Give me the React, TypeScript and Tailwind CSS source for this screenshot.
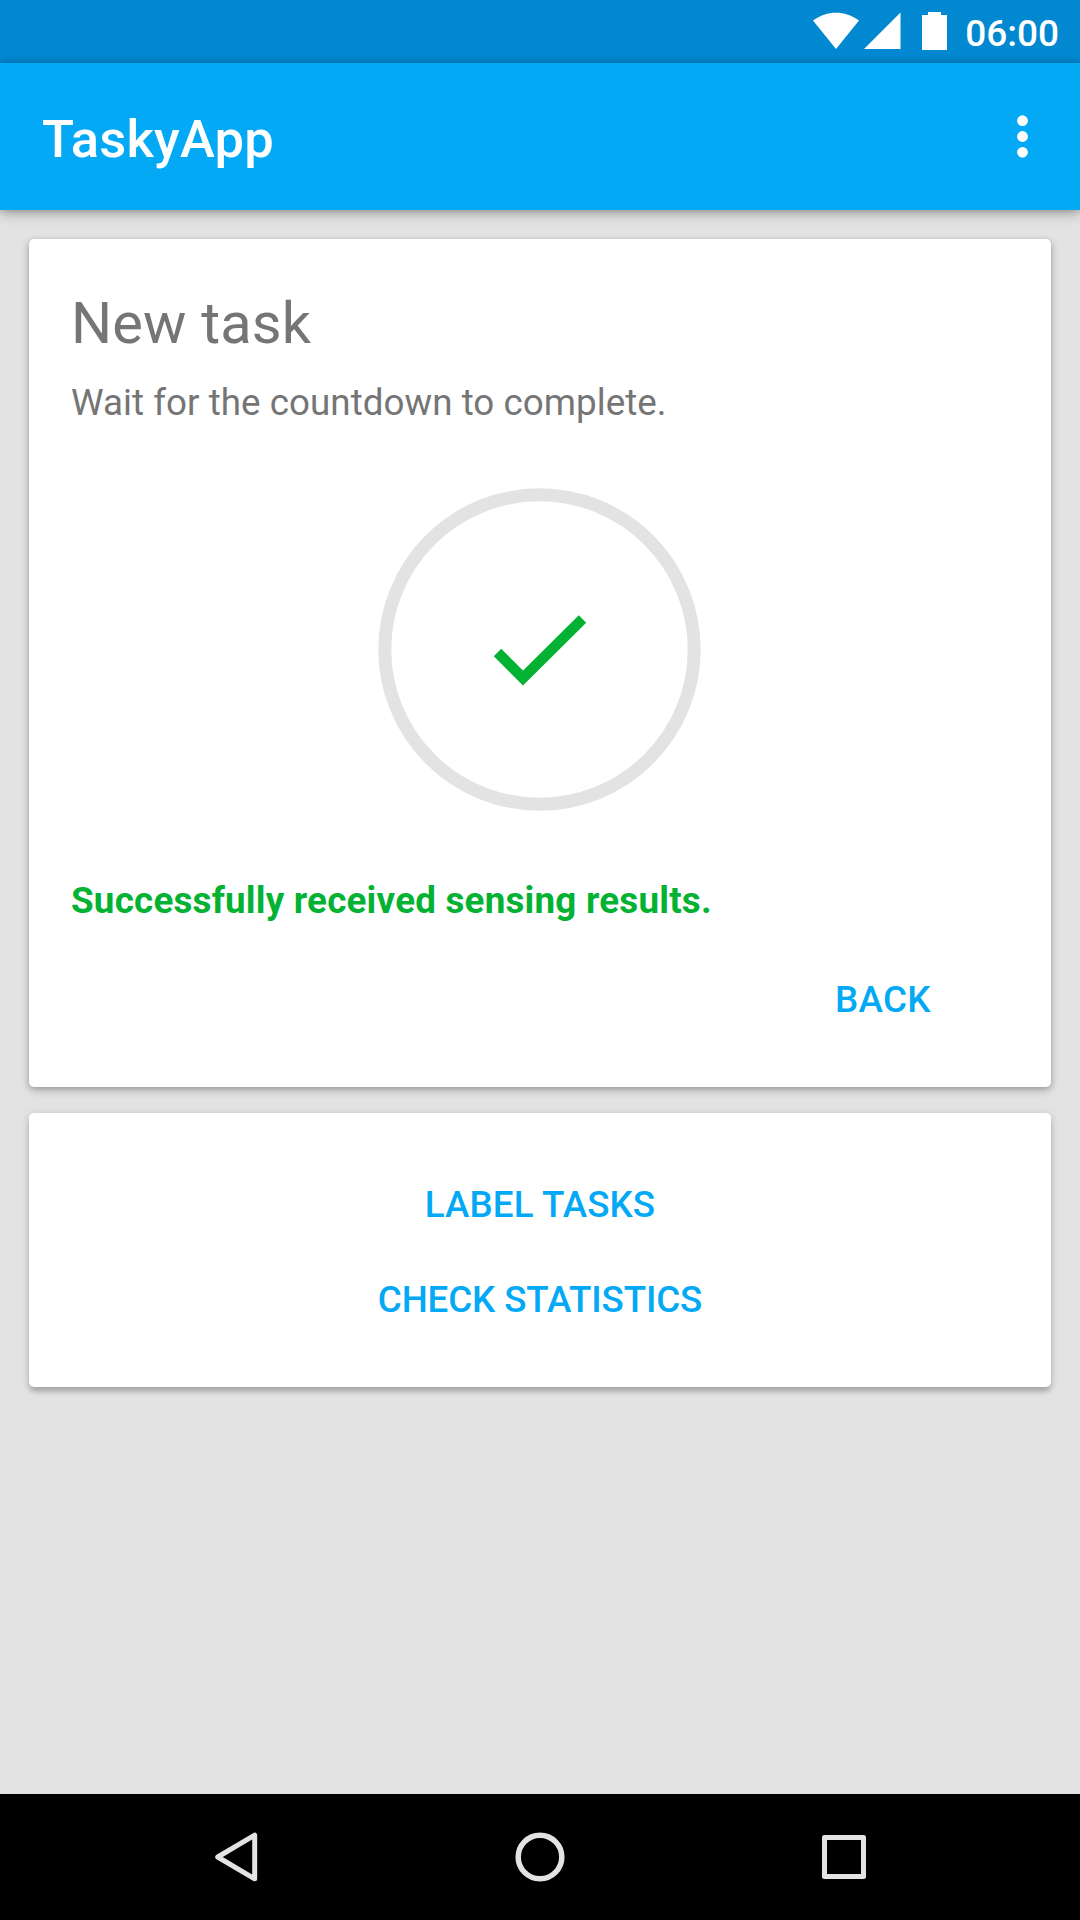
import React from "react";

const cardShadow =
  "shadow-[0_3px_8px_0_rgba(0,0,0,0.28),0_1px_4px_0_rgba(0,0,0,0.1)]";
const raisedCardShadow =
  "shadow-[0_6px_5px_-1px_rgba(0,0,0,0.16),0_2px_8px_0_rgba(0,0,0,0.18)]";

function StatusBar() {
  return (
    <div className="flex h-[63px] shrink-0 justify-end bg-[#0288d1] pr-[21px] text-white">
      <svg className="mr-[18px] h-[63px] w-[134px]" viewBox="0 0 134 63" fill="currentColor">
        <path d="M0 20.5C14 10 32 10 46 20.5L23 49Z" />
        <path d="M51 49L87.5 12.5V49Z" />
        <path d="M109 15h6v-3h13v3h6v35h-25Z" />
      </svg>
      <span className="mt-[12px] text-[37px] leading-[43px] font-medium">06:00</span>
    </div>
  );
}

function AppBar() {
  return (
    <header className="relative flex h-[147px] shrink-0 items-center justify-between bg-[#03a9f4] pl-[42px] text-white shadow-[0_4px_12px_0_rgba(0,0,0,0.26),0_0_7px_0_rgba(0,0,0,0.2)]">
      <h1 className="mt-[4px] text-[52.5px] leading-[62px] font-medium tracking-[0.2px]">TaskyApp</h1>
      <button className="h-[147px] w-[74px]" aria-label="More options">
        <svg className="block h-[147px] w-[74px]" viewBox="0 0 74 147" fill="currentColor">
          <circle cx="16.5" cy="57.7" r="5.4" />
          <circle cx="16.5" cy="73.5" r="5.4" />
          <circle cx="16.5" cy="89.3" r="5.4" />
        </svg>
      </button>
    </header>
  );
}

function NavBar() {
  return (
    <nav className="flex h-[126px] shrink-0 items-center justify-between bg-black px-[211px] text-[#e3e3e3]">
      <svg className="h-[50px] w-[50px]" viewBox="0 0 50 50" fill="none" stroke="currentColor" strokeWidth="5" strokeLinejoin="round">
        <path d="M6.700 25L43.700 3.200V46.800Z" />
      </svg>
      <svg className="h-[50px] w-[50px]" viewBox="0 0 50 50" fill="none" stroke="currentColor" strokeWidth="5.500">
        <circle cx="25" cy="25" r="21.800" />
      </svg>
      <svg className="h-[50px] w-[50px]" viewBox="0 0 50 50" fill="none" stroke="currentColor" strokeWidth="5" strokeLinejoin="round">
        <rect x="5.500" y="5.500" width="39" height="39" />
      </svg>
    </nav>
  );
}

export default function App() {
  return (
    <div className="flex h-[1920px] w-[1080px] flex-col overflow-hidden bg-[#e3e3e3] font-['Roboto',sans-serif]">
      <StatusBar />
      <AppBar />
      <main className="flex flex-1 flex-col gap-[26px] px-[29px] pt-[29px]">
        <section className={`flex h-[848px] flex-col rounded-[5px] bg-white px-[42px] ${cardShadow}`}>
          <h2 className="mt-[50px] text-[57.75px] leading-[68px] tracking-[0.15px] text-[#757575]">New task</h2>
          <p className="mt-[24px] text-[36.75px] leading-[43px] tracking-[0.04px] text-[#757575]">
            Wait for the countdown to complete.
          </p>
          <svg className="mt-[64px] mr-[1px] h-[323px] w-[323px] self-center" viewBox="0 0 323 323" fill="none">
            <circle cx="161.500" cy="161.500" r="154.700" stroke="#e3e3e3" strokeWidth="13" />
            <path d="M119.500 164.500L145 190L204.500 131" stroke="#03b233" strokeWidth="10.500" />
          </svg>
          <p className="mt-[68px] text-[36.75px] leading-[43px] font-bold tracking-[0.22px] text-[#03b233]">
            Successfully received sensing results.
          </p>
          <button className="mt-[56px] mr-[78px] self-end text-[36.75px] leading-[43px] font-medium tracking-[0.4px] text-[#03a9f4]">
            BACK
          </button>
        </section>
        <section className={`flex h-[274px] flex-col items-center gap-[52px] rounded-[5px] bg-white pt-[70px] text-[36.75px] leading-[43px] font-medium text-[#03a9f4] ${raisedCardShadow}`}>
          <button className="tracking-[0.08px]">LABEL TASKS</button>
          <button className="tracking-[-0.12px]">CHECK STATISTICS</button>
        </section>
      </main>
      <NavBar />
    </div>
  );
}
